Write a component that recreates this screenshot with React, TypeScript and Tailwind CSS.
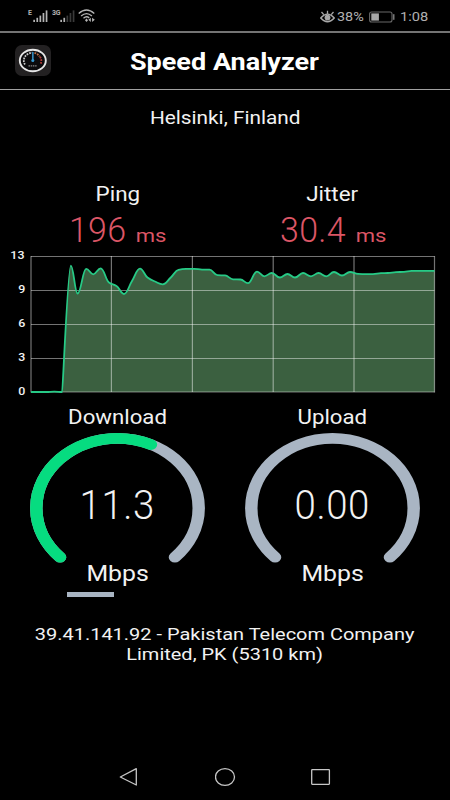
const SPEEDS: [number, number][] = [
  [31, 392], [38.8, 392], [46.5, 392], [54.3, 391.6], [62.2, 392], [70.8, 265.6], [77.6, 293.5],
  [86.2, 268.8], [93.2, 274.3], [100.7, 268.3], [109, 282.5], [116.5, 286], [124, 294], [132, 281],
  [140, 268.6], [147.5, 277.5], [155, 281.5], [162.8, 284.3], [170.8, 277.5], [178.5, 269.8],
  [186, 268.9], [194, 268.8], [202, 269.6], [209.5, 269.7], [217.4, 275.2], [225, 275.4],
  [233, 279.3], [240.5, 279.5], [248, 283.2], [257, 271.6], [264.3, 276.3], [271.8, 273],
  [279.8, 277.5], [287.5, 274], [295, 277.5], [303, 273], [311, 276.3], [318.6, 273],
  [326.3, 276.3], [334, 272], [342, 275.5], [350, 272], [358, 273.9], [366, 274.2], [373, 274.1],
  [381, 273.2], [388, 273], [396, 272.1], [404, 271.9], [411.5, 270.9], [419, 270.8], [427, 270.8],
  [434.5, 270.8],
];

// Cubic interpolation through the samples, flat at every local extreme
function smooth(pts: [number, number][]) {
  const slope = (i: number) => (pts[i + 1][1] - pts[i][1]) / (pts[i + 1][0] - pts[i][0]);
  const tangents = pts.map((_, i) => {
    if (i === 0 || i === pts.length - 1) return 0;
    const a = slope(i - 1);
    const b = slope(i);
    return a * b <= 0 ? 0 : (2 * a * b) / (a + b);
  });
  let d = `M${pts[0][0]},${pts[0][1]}`;
  for (let i = 0; i < pts.length - 1; i++) {
    const [x0, y0] = pts[i];
    const [x1, y1] = pts[i + 1];
    const h0 = i === 4 ? 0.5 : (x1 - x0) / 2.4;
    const h1 = i === 4 ? 3 : h0;
    d += `C${x0 + h0},${y0 + tangents[i] * h0} ${x1 - h1},${y1 - tangents[i + 1] * h1} ${x1},${y1}`;
  }
  return d;
}

const line = smooth(SPEEDS);

function Signal({ lit }: { lit: number }) {
  return (
    <svg className="h-3 w-[15px]" viewBox="0 0 15 12">
      {[2.2, 4.2, 6.4, 9, 11.6].map((h, i) => (
        <rect key={i} x={i * 3.1 + 0.3} y={12 - h} width="1.7" height={h} fill={i < lit ? "#b4b4b4" : "#3a3a3a"} />
      ))}
    </svg>
  );
}

function StatusBar() {
  return (
    <div className="flex h-[33px] items-start justify-between border-b-2 border-[#747474] pl-7 pr-[22px] pt-[9px] text-[#b0b0b0]">
      <div className="flex items-start">
        <span className="w-[5px] text-[7px] font-bold leading-[8px]">E</span>
        <div className="mt-px"><Signal lit={5} /></div>
        <span className="ml-1 w-[8px] text-[7px] font-bold leading-[8px] tracking-[-0.3px]">3G</span>
        <div className="mt-px"><Signal lit={2} /></div>
        <svg className="ml-[3px] h-[13px] w-[17px]" viewBox="0 0 17 13" fill="none" stroke="#b4b4b4" strokeWidth="1.3">
          <path d="M0.7 4.6Q8.5-2.5 16.3 4.6M3.1 7.1Q8.5 2.2 13.9 7.1M5.5 9.3Q8.5 6.4 11.2 9" />
          <path d="M7 11.2 8.5 9.5 10 11.2 8.5 12.9Z" fill="#b4b4b4" stroke="none" />
          <path d="M10.4 10.8 12.8 8.7v4.2ZM16.8 10.8 14.1 8.7v4.2Z" fill="#b4b4b4" stroke="none" />
        </svg>
      </div>
      <div className="flex items-center">
        <svg className="h-[13px] w-[15px]" viewBox="0 0 15 13" fill="none" stroke="#a8a8a8" strokeWidth="1.3">
          <path d="M0.7 8Q7.5 0.2 14.3 8 7.5 15.5 0.7 8Z" />
          <circle cx="7.5" cy="7.6" r="2.3" fill="#a8a8a8" />
          <path d="M7.5 4V0.8M3.8 4.6 1.5 2M11.2 4.6 13.5 2" />
        </svg>
        <span className="ml-[2px] w-[28px] text-[13px] leading-[15px]">
          <span className="inline-block origin-left scale-x-[1.11]">38%</span>
        </span>
        <svg className="ml-1 h-3 w-[27px]" viewBox="0 0 27 12">
          <rect x="0.6" y="1" width="22.4" height="10" rx="2" fill="none" stroke="#686868" strokeWidth="1.1" />
          <rect x="2.3" y="2.4" width="7.6" height="7.2" fill="#a8a8a8" />
          <rect x="23.9" y="3.2" width="1.6" height="5.6" fill="#777" />
        </svg>
        <span className="ml-1 w-[28px] text-[13px] leading-[15px]">
          <span className="inline-block origin-left scale-x-[1.13]">1:08</span>
        </span>
      </div>
    </div>
  );
}

function Logo() {
  return (
    <svg className="h-[31px] w-9" viewBox="0 0 36 31" fill="none">
      <rect width="36" height="31" rx="7" fill="#232122" />
      <ellipse cx="17.8" cy="15.5" rx="13" ry="10.8" fill="#0b0b0d" stroke="#e6e6e6" strokeWidth="1.9" />
      <path d="M10 19.5A9.5 8 0 0 1 17.5 7.6" stroke="#c9c9c9" strokeWidth="1.8" strokeDasharray="1.7 1" />
      <path d="M19.5 7.8A9.5 8 0 0 1 24.5 11.5" stroke="#b96b42" strokeWidth="1.8" strokeDasharray="1.7 1" />
      <path d="M25 11.8A9.5 8 0 0 1 25.3 19.5" stroke="#b23b36" strokeWidth="1.8" strokeDasharray="1.7 1" />
      <path d="M17.8 7v8" stroke="#3588b8" strokeWidth="1.7" />
      <circle cx="17.8" cy="15.5" r="1.5" fill="#3399d2" />
      <path d="M13.5 20.8h8.5" stroke="#888" strokeWidth="1.3" strokeDasharray="1.5 0.7" />
    </svg>
  );
}

function Header() {
  return (
    <header className="flex h-[57px] items-center border-b border-[#a0a0a0] pl-[15px]">
      <div className="-mt-px"><Logo /></div>
      <h1 className="-ml-[52px] mt-[3px] flex-1 text-center text-[23px] font-bold leading-7 text-white">
        <span className="inline-block scale-x-[1.175]">Speed Analyzer</span>
      </h1>
    </header>
  );
}

function Metric({ label, value }: { label: string; value: string }) {
  return (
    <div className="flex w-[215px] flex-col items-center">
      <div className="text-[20px] leading-6"><span className="inline-block scale-x-[1.12]">{label}</span></div>
      <div className="mt-[6px] flex items-baseline whitespace-nowrap leading-[38px] text-[#dc5666]">
        <span className="inline-block scale-x-[0.97] text-[35px] font-light tracking-[0.3px]">{value}</span>
        <span className="ml-[11px] inline-block scale-x-[1.16] pr-[2px] text-[19px]">ms</span>
      </div>
    </div>
  );
}

function Chart() {
  return (
    <div className="-mt-[5px] flex h-[148px]">
      <div className="flex w-[25px] flex-col text-right text-[11px] font-medium leading-[34px]">
        {["13", "9", "6", "3", "0"].map((n, i) => (
          <span key={n} className={i === 0 ? "-mt-[11px]" : ""}>
            <span className="inline-block origin-right scale-x-[1.13]">{n}</span>
          </span>
        ))}
      </div>
      <svg className="h-[148px] w-[425px]" viewBox="25 250 425 148" fill="none">
        <path d={`${line}V392H62.2Z`} fill="#3b6040" />
        <path d="M31 256.5H434.5M31 290.5H434.5M31 324.5H434.5M31 358.5H434.5M31 392H434.5" stroke="#fff" strokeOpacity="0.45" strokeWidth="1.2" />
        <path d="M31 256V392.5M111.4 256V392M192.4 256V392M273.2 256V392M354 256V392M434.5 256V392.5" stroke="#fff" strokeOpacity="0.45" strokeWidth="1.2" />
        <path d={line} stroke="#27ca86" strokeWidth="1.8" strokeLinejoin="round" />
      </svg>
    </div>
  );
}

function Gauge({ label, value, progress }: { label: string; value: string; progress: number }) {
  const arc = "M34.38 165.62A92.8 92.8 0 1 1 165.62 165.62";
  return (
    <div className="flex w-[215px] flex-col items-center">
      <div className="text-[20px] leading-6"><span className="inline-block scale-x-[1.11]">{label}</span></div>
      <div className="mt-[4px] grid h-[125px] w-[175px]">
        <svg className="col-start-1 row-start-1 h-[150px] w-[175px]" viewBox="0 0 200 200" preserveAspectRatio="none" fill="none" strokeWidth="14.2" strokeLinecap="round">
          <path d={arc} stroke="#a9b5c3" />
          {progress > 0 && <path d={arc} pathLength={100} stroke="#06dc80" strokeDasharray={`${progress} 200`} />}
        </svg>
        <div className="col-start-1 row-start-1 pt-[49px] text-center text-[40px] font-light leading-[48px]">
          <span className="inline-block scale-x-[0.96] tracking-[0.6px]">{value}</span>
        </div>
      </div>
      <div className="mt-[2px] text-[22px] leading-7"><span className="inline-block scale-x-[1.13]">Mbps</span></div>
    </div>
  );
}

function NavBar() {
  return (
    <nav className="mt-auto flex h-[46px] justify-center gap-[75px] pt-[13px]">
      <svg className="h-5 w-[21px]" viewBox="0 0 21 20" fill="none" stroke="#c6c6c6" strokeWidth="1.3" strokeLinejoin="round">
        <path d="M1.3 10 17.3 1.7V18Z" />
      </svg>
      <svg className="h-5 w-[21px]" viewBox="0 0 21 20" fill="none" stroke="#c6c6c6" strokeWidth="1.3">
        <ellipse cx="10" cy="10" rx="9.5" ry="8.4" />
      </svg>
      <svg className="h-5 w-[21px]" viewBox="0 0 21 20" fill="none" stroke="#c6c6c6" strokeWidth="1.3">
        <rect x="0.7" y="2.7" width="17.7" height="14.6" rx="0.5" />
      </svg>
    </nav>
  );
}

export default function App() {
  return (
    <div className="flex h-[800px] w-[450px] flex-col overflow-hidden bg-black font-['Roboto',sans-serif] text-[#f2f2f2]">
      <StatusBar />
      <Header />
      <p className="mt-4 text-center text-[18px] leading-6"><span className="inline-block scale-x-[1.155]">Helsinki, Finland</span></p>
      <div className="mt-[52px] flex justify-center">
        <Metric label="Ping" value="196" />
        <Metric label="Jitter" value="30.4" />
      </div>
      <Chart />
      <div className="mt-[7px] flex justify-center">
        <Gauge label="Download" value="11.3" progress={59} />
        <Gauge label="Upload" value="0.00" progress={0} />
      </div>
      <div className="ml-[67px] mt-[4px] h-[5px] w-[47px] bg-[#a9b5c3]" />
      <p className="mt-[27px] text-center text-[17px] leading-5">
        <span className="inline-block scale-x-[1.175]">
          39.41.141.92 - Pakistan Telecom Company
          <br />
          Limited, PK (5310 km)
        </span>
      </p>
      <NavBar />
    </div>
  );
}
